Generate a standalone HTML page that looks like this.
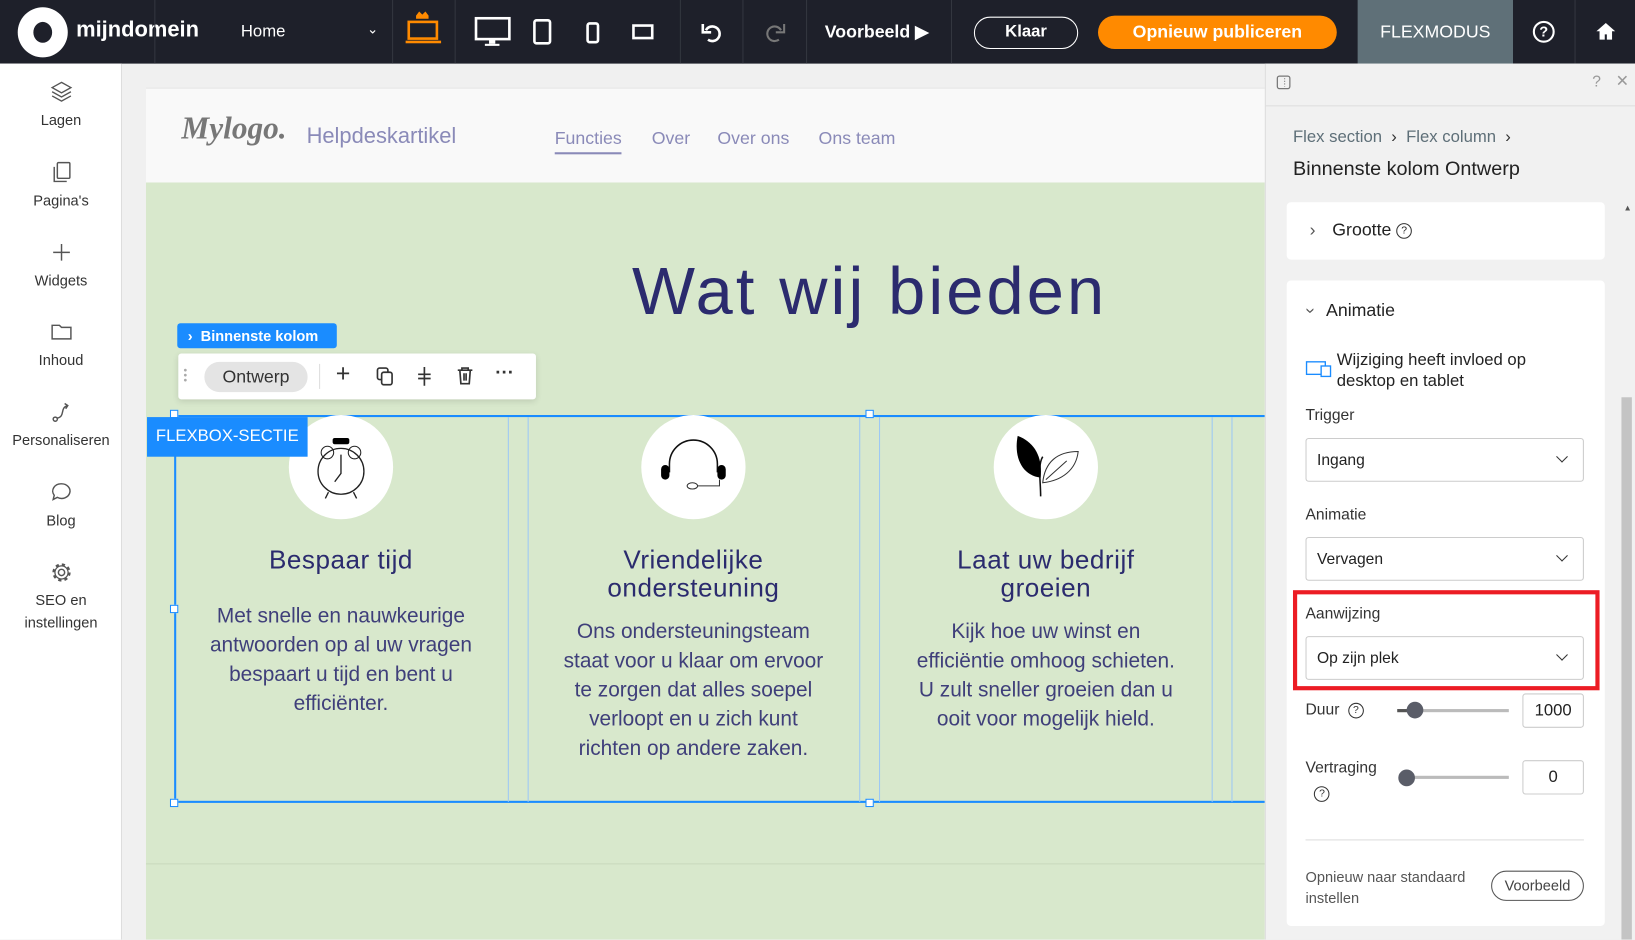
<!DOCTYPE html>
<html><head><meta charset="utf-8"><style>
*{box-sizing:border-box;margin:0;padding:0}
html,body{width:1635px;height:939px;overflow:hidden;background:#f0f0f0;font-family:"Liberation Sans",sans-serif}
#w{position:absolute;left:0;top:0;width:1568px;height:901px;transform:scale(1.04273);transform-origin:0 0;overflow:hidden;background:#f0f0f0}
.a{position:absolute}
.top{left:0;top:0;width:1568px;height:61px;background:#1e202a;color:#fff}
.sep{position:absolute;top:0;width:1px;height:61px;background:#33363f}
.side{left:0;top:61px;width:117px;height:840px;background:#fff;border-right:1px solid #ddd}
.si{position:absolute;left:0;width:117px;text-align:center;font-size:14px;color:#333}
.si svg{display:block;margin:0 auto 8px}
.nav{font-size:17px;color:#8a8ab8}
.col{position:absolute;top:398px;text-align:center;color:#2b2b6e}
.col h3{font-size:25px;font-weight:normal;line-height:27px;margin-top:124px;letter-spacing:0.5px}
.col p{font-size:20px;line-height:28px;margin:14px auto 0;color:#3f3f7a;width:262px}
.circ{position:absolute;top:0;width:100px;height:100px;border-radius:50%;background:#fff}
.panel{left:1213px;top:61px;width:355px;height:840px;background:#f1f1f1;border-left:1px solid #ddd}
.card{position:absolute;background:#fff;border-radius:4px;left:20px;width:305px}
.lbl{position:absolute;font-size:15px;color:#333}
.sel{position:absolute;left:18px;width:267px;height:42px;border:1px solid #ccc;border-radius:3px;font-size:15px;color:#222;padding:12px 10px}
.sel:after{content:"";position:absolute;right:16px;top:13px;width:7px;height:7px;border-right:1.5px solid #333;border-bottom:1.5px solid #333;transform:rotate(45deg)}
.q{display:inline-block;width:15px;height:15px;border:1.3px solid #333;border-radius:50%;font-size:10px;text-align:center;line-height:13px;vertical-align:middle}
</style></head><body><div id="w">

<div class="a top">
 <div class="a" style="left:17px;top:7px;width:48px;height:48px;border-radius:50%;background:#fff"></div>
 <div class="a" style="left:32px;top:21px;width:18px;height:20px;border-radius:50%;background:#1e202a"></div>
 <div class="a" style="left:73px;top:17px;font-size:21px;font-weight:bold">mijndomein</div>
 <div class="sep" style="left:148px"></div>
 <div class="a" style="left:231px;top:22px;font-size:16px">Home</div>
 <div class="a" style="left:352px;top:20px;font-size:13px">&#8964;</div>
 <div class="sep" style="left:376px"></div>
 <svg class="a" style="left:388px;top:8px" width="36" height="36"><path d="M11 7l3-4 3 3 3-3 3 4 0 3h-12z" fill="#ff8a00"/><rect x="4" y="13" width="27" height="16" fill="none" stroke="#ff8a00" stroke-width="2.5"/><rect x="1" y="31" width="34" height="2.5" fill="#ff8a00"/></svg>
 <div class="sep" style="left:436px"></div>
 <svg class="a" style="left:455px;top:16px" width="36" height="30"><rect x="1.5" y="1.5" width="32" height="20" fill="none" stroke="#fff" stroke-width="2.5"/><rect x="14" y="22" width="6" height="4" fill="#fff"/><rect x="10" y="26" width="14" height="2" fill="#fff"/></svg>
 <svg class="a" style="left:511px;top:18px" width="20" height="26"><rect x="1.5" y="1.5" width="15" height="22" rx="2" fill="none" stroke="#fff" stroke-width="2.5"/></svg>
 <svg class="a" style="left:562px;top:21px" width="14" height="22"><rect x="1.5" y="1.5" width="10" height="18" rx="2" fill="none" stroke="#fff" stroke-width="2.5"/></svg>
 <svg class="a" style="left:606px;top:23px" width="22" height="16"><rect x="1.5" y="1.5" width="18" height="12" fill="none" stroke="#fff" stroke-width="2.5"/></svg>
 <div class="sep" style="left:652px"></div>
 <svg class="a" style="left:672px;top:20px" width="22" height="22"><path d="M5 9a7 7 0 1 1 2 9" fill="none" stroke="#fff" stroke-width="2.5"/><path d="M2 3v8h8" fill="none" stroke="#fff" stroke-width="2.5"/></svg>
 <div class="sep" style="left:712px"></div>
 <svg class="a" style="left:732px;top:20px" width="22" height="22"><path d="M17 9a7 7 0 1 0-2 9" fill="none" stroke="#777" stroke-width="2"/><path d="M20 3v8h-8" fill="none" stroke="#777" stroke-width="2"/></svg>
 <div class="sep" style="left:773px"></div>
 <div class="a" style="left:791px;top:21px;font-size:17px;font-weight:bold">Voorbeeld &#9654;</div>
 <div class="sep" style="left:912px"></div>
 <div class="a" style="left:934px;top:16px;width:100px;height:31px;border:1.5px solid #fff;border-radius:16px;text-align:center;font-size:16px;font-weight:bold;line-height:28px">Klaar</div>
 <div class="a" style="left:1053px;top:15px;width:229px;height:32px;background:#ff8a00;border-radius:16px;text-align:center;font-size:17px;font-weight:bold;line-height:32px">Opnieuw publiceren</div>
 <div class="a" style="left:1302px;top:0;width:149px;height:61px;background:#5f7078;text-align:center;font-size:17px;line-height:61px">FLEXMODUS</div>
 <div class="a" style="left:1470px;top:20px;width:21px;height:21px;border:2.2px solid #fff;border-radius:50%;font-size:14px;font-weight:bold;text-align:center;line-height:17px">?</div>
 <div class="sep" style="left:1510px"></div>
 <svg class="a" style="left:1530px;top:21px" width="20" height="18"><path d="M10 1L1 9h3v8h5v-5h2v5h5V9h3z" fill="#fff"/></svg>
</div>

<div class="a side">
 <div class="si" style="top:16px"><svg width="22" height="22"><path d="M11 2l9 5-9 5-9-5z M2 11l9 5 9-5 M2 15l9 5 9-5" fill="none" stroke="#555" stroke-width="1.3"/></svg>Lagen</div>
 <div class="si" style="top:93px"><svg width="22" height="22"><rect x="7" y="2" width="12" height="15" rx="1" fill="none" stroke="#555" stroke-width="1.4"/><path d="M4 6v14h12" fill="none" stroke="#555" stroke-width="1.4"/></svg>Pagina's</div>
 <div class="si" style="top:170px"><svg width="22" height="22"><path d="M11 3v16M3 11h16" stroke="#555" stroke-width="1.4"/></svg>Widgets</div>
 <div class="si" style="top:246px"><svg width="22" height="22"><path d="M2 5h7l2 2h9v11H2z" fill="none" stroke="#555" stroke-width="1.4"/></svg>Inhoud</div>
 <div class="si" style="top:323px"><svg width="22" height="22"><circle cx="5" cy="18" r="2" fill="none" stroke="#555" stroke-width="1.4"/><path d="M7 17c8-2 2-10 10-12M14 3l3 2-2 3" fill="none" stroke="#555" stroke-width="1.4"/></svg>Personaliseren</div>
 <div class="si" style="top:400px"><svg width="22" height="22"><path d="M11 3a8 7 0 1 1-4 13l-4 2 1-4a8 7 0 0 1 7-11z" fill="none" stroke="#555" stroke-width="1.4"/></svg>Blog</div>
 <div class="si" style="top:477px;line-height:22px"><svg width="22" height="22" style="margin-bottom:4px"><circle cx="11" cy="11" r="3" fill="none" stroke="#555" stroke-width="1.4"/><circle cx="11" cy="11" r="7.5" fill="none" stroke="#555" stroke-width="2.5" stroke-dasharray="3 2.9"/><circle cx="11" cy="11" r="6.3" fill="none" stroke="#555" stroke-width="1.2"/></svg>SEO en<br>instellingen</div>
</div>

<div class="a" style="left:140px;top:84px;width:1073px;height:91px;background:#f9f9f9;border-top:1px solid #e4e4e4">
 <div class="a" style="left:34px;top:22px;font-family:'Liberation Serif',serif;font-style:italic;font-weight:bold;font-size:30px;color:#777">Mylogo.</div>
 <div class="a" style="left:154px;top:34px;font-size:21px;color:#8a8ab8">Helpdeskartikel</div>
 <div class="a nav" style="left:392px;top:38px;border-bottom:2px solid #8a8ab8;padding-bottom:3px">Functies</div>
 <div class="a nav" style="left:485px;top:38px">Over</div>
 <div class="a nav" style="left:548px;top:38px">Over ons</div>
 <div class="a nav" style="left:645px;top:38px">Ons team</div>
</div>
<div class="a" style="left:140px;top:175px;width:1073px;height:726px;background:#d8e8cc"></div>
<div class="a" style="left:140px;top:828px;width:1073px;height:1px;background:#c9d9bd"></div>
<div class="a" style="left:140px;top:242px;width:1388px;text-align:center;font-size:64px;letter-spacing:3px;color:#2b2b6e">Wat wij bieden</div>

<div class="a" style="left:167px;top:398px;width:1046px;height:372px;border:2px solid #1a8cff;border-right:none"></div>
<div class="a" style="left:487px;top:400px;width:20px;height:369px;border-left:1px solid #9cc8f5;border-right:1px solid #9cc8f5"></div>
<div class="a" style="left:824px;top:400px;width:20px;height:369px;border-left:1px solid #9cc8f5;border-right:1px solid #9cc8f5"></div>
<div class="a" style="left:1162px;top:400px;width:20px;height:369px;border-left:1px solid #9cc8f5;border-right:1px solid #9cc8f5"></div>
<div class="a" style="left:163px;top:393px;width:8px;height:8px;background:#fff;border:1px solid #1a8cff"></div>
<div class="a" style="left:163px;top:580px;width:8px;height:8px;background:#fff;border:1px solid #1a8cff"></div>
<div class="a" style="left:163px;top:766px;width:8px;height:8px;background:#fff;border:1px solid #1a8cff"></div>
<div class="a" style="left:830px;top:393px;width:8px;height:8px;background:#fff;border:1px solid #1a8cff"></div>
<div class="a" style="left:830px;top:766px;width:8px;height:8px;background:#fff;border:1px solid #1a8cff"></div>

<div class="col" style="left:177px;width:300px">
 <div class="circ" style="left:100px"><svg width="100" height="100"><rect x="42" y="22" width="16" height="6" rx="2" fill="#000"/><circle cx="50" cy="54" r="22" fill="none" stroke="#222" stroke-width="1.3"/><circle cx="37" cy="36" r="6" fill="none" stroke="#222"/><circle cx="63" cy="36" r="6" fill="none" stroke="#222"/><path d="M50 38v18l-6 8M38 74l-3 6M62 74l3 6" fill="none" stroke="#222" stroke-width="1.3"/></svg></div>
 <h3 style="margin-top:126px">Bespaar tijd</h3>
 <p style="margin-top:26px">Met snelle en nauwkeurige antwoorden op al uw vragen bespaart u tijd en bent u efficiënter.</p>
</div>
<div class="col" style="left:515px;width:300px">
 <div class="circ" style="left:100px"><svg width="100" height="100"><path d="M27 55v-8a23 23 0 0 1 46 0v8" fill="none" stroke="#111" stroke-width="1.5"/><rect x="19" y="48" width="8" height="14" rx="4" fill="#000"/><rect x="73" y="48" width="8" height="14" rx="4" fill="#000"/><path d="M75 62v6H54" fill="none" stroke="#333"/><ellipse cx="49" cy="68" rx="5" ry="3" fill="none" stroke="#333"/></svg></div>
 <h3 style="margin-top:126px">Vriendelijke<br>ondersteuning</h3>
 <p>Ons ondersteuningsteam staat voor u klaar om ervoor te zorgen dat alles soepel verloopt en u zich kunt richten op andere zaken.</p>
</div>
<div class="col" style="left:853px;width:300px">
 <div class="circ" style="left:100px"><svg width="100" height="100"><path d="M45 78c0-15-3-30 2-38" fill="none" stroke="#111" stroke-width="1.5"/><path d="M45 60c-18-2-26-20-22-40 16 6 24 20 22 40z" fill="#000"/><path d="M47 65c2-20 14-30 34-30-2 18-16 28-34 30zM50 62l20-18" fill="none" stroke="#333"/></svg></div>
 <h3 style="margin-top:126px">Laat uw bedrijf<br>groeien</h3>
 <p>Kijk hoe uw winst en efficiëntie omhoog schieten. U zult sneller groeien dan u ooit voor mogelijk hield.</p>
</div>

<div class="a" style="left:141px;top:400px;width:154px;height:38px;background:#1a8cff;color:#fff;font-size:16px;line-height:38px;text-align:center">FLEXBOX-SECTIE</div>
<div class="a" style="left:170px;top:310px;width:153px;height:24px;background:#1a8cff;border-radius:3px;color:#fff;font-size:14px;font-weight:bold;line-height:24px;padding-left:10px">›&nbsp;&nbsp;Binnenste kolom</div>
<div class="a" style="left:171px;top:339px;width:343px;height:44px;background:#fff;border-radius:3px;box-shadow:0 2px 6px rgba(0,0,0,.12)">
 <div class="a" style="left:5px;top:14px;color:#aaa;font-size:10px;line-height:5px">•<br>•<br>•</div>
 <div class="a" style="left:25px;top:8px;width:99px;height:29px;background:#e4e4e4;border-radius:15px;text-align:center;font-size:17px;line-height:29px;color:#333">Ontwerp</div>
 <div class="a" style="left:135px;top:10px;width:1px;height:24px;background:#ddd"></div>
 <div class="a" style="left:151px;top:6px;font-size:24px;color:#333">+</div>
 <svg class="a" style="left:190px;top:13px" width="16" height="18"><rect x="1" y="1" width="10" height="11" rx="2" fill="none" stroke="#333" stroke-width="1.6"/><rect x="5" y="5" width="10" height="12" rx="2" fill="#fff" stroke="#333" stroke-width="1.6"/></svg>
 <svg class="a" style="left:229px;top:12px" width="14" height="20"><path d="M7 1v18M1 8h12M1 12h12" stroke="#333" stroke-width="1.6"/></svg>
 <svg class="a" style="left:267px;top:12px" width="16" height="18"><path d="M1 4h14M5 4V2h6v2M3 4l1 13h8l1-13M7 7v7M9 7v7" fill="none" stroke="#333" stroke-width="1.6"/></svg>
 <div class="a" style="left:304px;top:8px;font-size:18px;font-weight:bold;color:#333">···</div>
</div>

<div class="a panel">
 <div class="a" style="left:0;top:0;width:355px;height:41px;border-bottom:1px solid #ddd"></div>
 <svg class="a" style="left:10px;top:11px" width="14" height="14"><rect x="1" y="1" width="12" height="12" rx="2" fill="none" stroke="#777" stroke-width="1.2"/><path d="M8 3v8" stroke="#777" stroke-dasharray="1 1.5"/></svg>
 <div class="a" style="left:313px;top:9px;color:#999;font-size:15px">?</div>
 <div class="a" style="left:336px;top:6px;color:#999;font-size:20px">×</div>
 <div class="a" style="left:26px;top:62px;font-size:16px;color:#5e6f78">Flex section &nbsp;<span style="color:#333">›</span>&nbsp; Flex column &nbsp;<span style="color:#333">›</span></div>
 <div class="a" style="left:26px;top:91px;font-size:19px;color:#222">Binnenste kolom Ontwerp</div>
 <div class="card" style="top:133px;height:55px"><div class="lbl" style="left:22px;top:17px;font-size:17px;color:#222"><span style="color:#555;margin-right:16px">›</span>Grootte <span class="q">?</span></div></div>
 <div class="card" style="top:208px;height:619px">
  <div class="lbl" style="left:20px;top:19px;font-size:17px;color:#222"><span style="display:inline-block;transform:rotate(90deg);color:#555;margin-right:12px">›</span>Animatie</div>
  <svg class="a" style="left:18px;top:77px" width="26" height="16"><rect x="1" y="1" width="18" height="12" fill="none" stroke="#1a8cff" stroke-width="1.3"/><rect x="15" y="5" width="9" height="10" fill="#fff" stroke="#1a8cff" stroke-width="1.3"/></svg>
  <div class="lbl" style="left:48px;top:67px;line-height:20px;color:#222;font-size:16px">Wijziging heeft invloed op<br>desktop en tablet</div>
  <div class="lbl" style="left:18px;top:121px">Trigger</div>
  <div class="sel" style="top:151px">Ingang</div>
  <div class="lbl" style="left:18px;top:216px">Animatie</div>
  <div class="sel" style="top:246px">Vervagen</div>
  <div class="a" style="left:6px;top:297px;width:294px;height:96px;border:4px solid #ec1c24"></div>
  <div class="lbl" style="left:18px;top:311px">Aanwijzing</div>
  <div class="sel" style="top:341px">Op zijn plek</div>
  <div class="lbl" style="left:18px;top:403px">Duur &nbsp;<span class="q">?</span></div>
  <div class="a" style="left:106px;top:411px;width:107px;height:3px;background:#bbb"></div>
  <div class="a" style="left:106px;top:411px;width:12px;height:3px;background:#555"></div>
  <div class="a" style="left:115px;top:404px;width:16px;height:16px;border-radius:50%;background:#5a5d68"></div>
  <div class="a" style="left:226px;top:396px;width:59px;height:33px;border:1px solid #ccc;border-radius:3px;text-align:center;line-height:31px;font-size:16px;color:#222">1000</div>
  <div class="lbl" style="left:18px;top:456px;line-height:24px">Vertraging<br>&nbsp;&nbsp;<span class="q">?</span></div>
  <div class="a" style="left:110px;top:475px;width:103px;height:3px;background:#bbb"></div>
  <div class="a" style="left:107px;top:469px;width:16px;height:16px;border-radius:50%;background:#5a5d68"></div>
  <div class="a" style="left:226px;top:460px;width:59px;height:33px;border:1px solid #ccc;border-radius:3px;text-align:center;line-height:31px;font-size:16px;color:#222">0</div>
  <div class="a" style="left:18px;top:536px;width:267px;height:1px;background:#ddd"></div>
  <div class="lbl" style="left:18px;top:562px;font-size:14px;line-height:20px;color:#555">Opnieuw naar standaard<br>instellen</div>
  <div class="a" style="left:196px;top:566px;width:89px;height:29px;border:1px solid #555;border-radius:15px;text-align:center;line-height:27px;font-size:14px;color:#444">Voorbeeld</div>
 </div>
 <div class="a" style="left:341px;top:320px;width:10px;height:520px;background:#c4c4c4"></div>
 <div class="a" style="left:343px;top:134px;font-size:8px;color:#555">▲</div>
</div>

</div></body></html>
